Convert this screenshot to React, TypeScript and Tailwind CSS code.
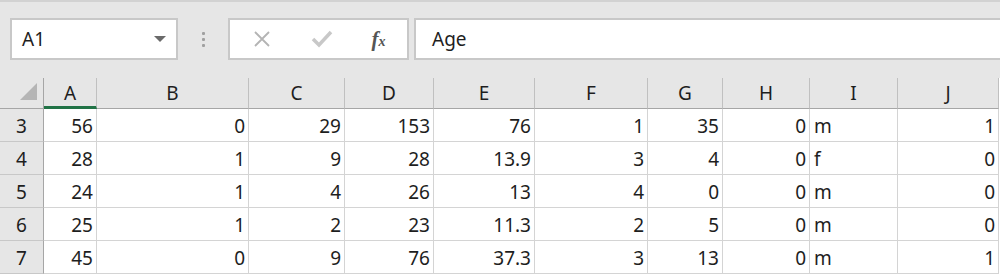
import React from "react";

const cols = ["A", "B", "C", "D", "E", "F", "G", "H", "I", "J"];
const rows: [number, (string | number)[]][] = [
  [3, [56, 0, 29, 153, 76, 1, 35, 0, "m", 1]],
  [4, [28, 1, 9, 28, "13.9", 3, 4, 0, "f", 0]],
  [5, [24, 1, 4, 26, 13, 4, 0, 0, "m", 0]],
  [6, [25, 1, 2, 23, "11.3", 2, 5, 0, "m", 0]],
  [7, [45, 0, 9, 76, "37.3", 3, 13, 0, "m", 1]],
];

const font = { fontFamily: '"Noto Sans", "Open Sans", Arial, sans-serif' };

export default function App() {
  return (
    <div className="w-[1000px] h-[276px] overflow-hidden bg-white text-[#1e1e1e]" style={font}>
      {/* toolbar */}
      <div className="h-[78px] bg-[#e6e6e6] border-t-2 border-[#d2d2d2] flex items-start pt-[16px] pl-[10px] gap-0">
        <div className="w-[168px] h-[42px] bg-white border-2 border-[#c8c8c8] flex items-center justify-between pl-[10px] pr-[10px]">
          <span className="text-[19px] pt-[1px]">A1</span>
          <svg width="12" height="7" viewBox="0 0 12 7">
            <path d="M0 0 L12 0 L6 6 Z" fill="#6a6a6a" />
          </svg>
        </div>
        <div className="w-[50px] h-[42px] flex flex-col items-center justify-center gap-[3px]">
          <div className="w-[3px] h-[3px] rounded-[1px] bg-[#a0a0a0]" />
          <div className="w-[3px] h-[3px] rounded-[1px] bg-[#a0a0a0]" />
          <div className="w-[3px] h-[3px] rounded-[1px] bg-[#a0a0a0]" />
        </div>
        <div className="w-[181px] h-[42px] bg-white border-2 border-[#c8c8c8] flex items-center">
          <div className="w-[60px] flex justify-center pl-[4px]">
            <svg width="16" height="16" viewBox="0 0 16 16">
              <path d="M1 1 L15 15 M15 1 L1 15" stroke="#b4b4b4" strokeWidth="1.8" />
            </svg>
          </div>
          <div className="w-[60px] flex justify-center pl-[4px]">
            <svg width="22" height="18" viewBox="0 0 22 18">
              <path d="M2 9 L8 15 L20 2" stroke="#c8c8c8" strokeWidth="3.5" fill="none" />
            </svg>
          </div>
          <div className="w-[57px] flex justify-center">
            <span
              className="italic font-bold text-[21px] text-[#555555] leading-none"
              style={{ fontFamily: '"Liberation Serif", serif' }}
            >
              f<span className="text-[14px]">x</span>
            </span>
          </div>
        </div>
        <div className="ml-[5px] flex-1 h-[42px] bg-white border-2 border-r-0 border-[#c8c8c8] flex items-center pl-[16px]">
          <span className="text-[19px] pt-[1px]">Age</span>
        </div>
      </div>
      {/* grid */}
      <div
        className="grid text-[19px]"
        style={{ gridTemplateColumns: "44px 53px 152px 96px 89px 101px 113px 75px 87px 88px 101px" }}
      >
        <div className="h-[31px] bg-[#e6e6e6] border-r border-b border-[#a6a6a6] flex items-end justify-end pr-[6px] pb-[8px]">
          <svg width="17" height="17" viewBox="0 0 17 17">
            <path d="M17 0 L17 17 L0 17 Z" fill="#b5b5b5" />
          </svg>
        </div>
        {cols.map((c, i) => (
          <div
            key={c}
            className={
              i === 0
                ? "h-[31px] bg-[#e6e6e6] border-r border-[#c0c0c0] border-b-[3px] border-b-[#217346] flex items-center justify-center pt-[3px]"
                : "h-[31px] bg-[#e6e6e6] border-r border-[#c0c0c0] border-b border-b-[#a6a6a6] flex items-center justify-center pt-[1px]"
            }
          >
            {c}
          </div>
        ))}
        {rows.map(([n, vals]) => (
          <React.Fragment key={n}>
            <div className="h-[33px] bg-[#e6e6e6] border-r border-r-[#a6a6a6] border-b border-b-[#c8c8c8] flex items-center justify-center pt-[2px]">
              {n}
            </div>
            {vals.map((v, i) => (
              <div
                key={i}
                className={
                  typeof v === "string" && /[a-z]/.test(v)
                    ? "h-[33px] border-r border-b border-[#d4d4d4] flex items-center justify-start pl-[4px] pt-[2px]"
                    : "h-[33px] border-r border-b border-[#d4d4d4] flex items-center justify-end pr-[3px] pt-[2px]"
                }
              >
                {v}
              </div>
            ))}
          </React.Fragment>
        ))}
      </div>
    </div>
  );
}
